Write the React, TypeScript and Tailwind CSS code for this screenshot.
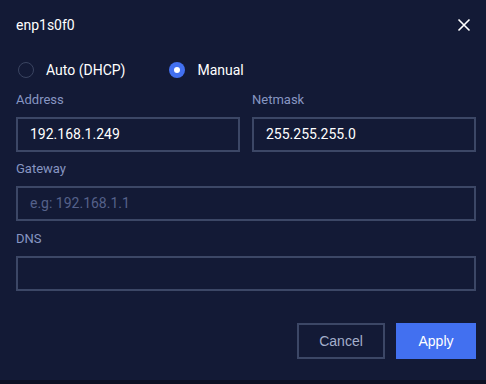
import React from "react";

const Radio: React.FC<{ checked?: boolean; label: string }> = ({ checked, label }) => (
  <label className="flex items-center gap-3">
    {checked ? (
      <span className="w-4 h-4 rounded-full bg-[#4270f0] flex items-center justify-center">
        <span className="w-[6px] h-[6px] rounded-full bg-white" />
      </span>
    ) : (
      <span className="w-4 h-4 rounded-full border border-[#3a4461]" />
    )}
    <span className="text-[14px] text-white">{label}</span>
  </label>
);

const Field: React.FC<{ label: string; value?: string; placeholder?: string; className?: string }> = ({
  label,
  value,
  placeholder,
  className,
}) => (
  <div className={className}>
    <div className="text-[13px] leading-[18px] text-[#8796c2] mb-2">{label}</div>
    <div className="h-[35px] border-2 border-[#3c4766] flex items-center pl-3 text-[14px]">
      {value ? (
        <span className="text-white">{value}</span>
      ) : (
        <span className="text-[#55618a]">{placeholder}</span>
      )}
    </div>
  </div>
);

export default function App() {
  return (
    <div className="w-[486px] h-[384px] bg-[#0c1124] font-['Roboto',sans-serif]">
      <div className="h-[380px] bg-[#131a36] pl-4 pr-[10px] flex flex-col">
        <div className="h-[50px] flex items-center justify-between">
          <span className="text-[14px] text-white">enp1s0f0</span>
          <svg width="14" height="14" viewBox="0 0 14 14" className="mr-[5px]">
            <path d="M1.5 1.5 L12.5 12.5 M12.5 1.5 L1.5 12.5" stroke="white" strokeWidth="1.6" />
          </svg>
        </div>
        <div className="h-[40px] flex items-center gap-[44px] pl-[2px]">
          <Radio label="Auto (DHCP)" />
          <Radio checked label="Manual" />
        </div>
        <div className="grid grid-cols-2 gap-x-3 mt-[1px]">
          <Field label="Address" value="192.168.1.249" />
          <Field label="Netmask" value="255.255.255.0" />
        </div>
        <Field className="mt-[8px]" label="Gateway" placeholder="e.g: 192.168.1.1" />
        <Field className="mt-[9px]" label="DNS" />
        <div className="mt-[32px] flex justify-end gap-[11px] font-['Liberation_Sans',sans-serif] text-[14px]">
          <button className="w-[88px] h-[36px] border-2 border-[#3c4766] text-[#a3aecb]">Cancel</button>
          <button className="w-[80px] h-[36px] bg-[#4270f0] text-white">Apply</button>
        </div>
      </div>
    </div>
  );
}
